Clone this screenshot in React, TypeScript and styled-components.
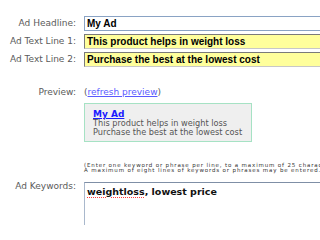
import styled, { createGlobalStyle } from "styled-components";

const GlobalStyle = createGlobalStyle`
    html, body {
        margin: 0;
        padding: 0;
        background: #ffffff;
        overflow: hidden;
    }
`

const Form = styled.div`
    width: 320px;
    height: 225px;
    padding-top: 16px;
    box-sizing: border-box;
    overflow: hidden;
    display: grid;
    grid-template-columns: 76px minmax(0, 1fr);
    column-gap: 8px;
    font-family: "DejaVu Sans", Verdana, sans-serif;
`

const Label = styled.div<{ top?: number }>`
    font-size: 9px;
    color: #5a5a5a;
    text-align: right;
    padding-top: ${props => props.top ?? 2}px;
    white-space: nowrap;
`

const Field = styled.div<{ bottom?: number }>`
    margin-bottom: ${props => props.bottom ?? 0}px;
    min-width: 0;
`

const TextInput = styled.div<{ highlight?: boolean }>`
    height: 15px;
    box-sizing: border-box;
    padding: 0 2px;
    font-family: "Liberation Sans", Arial, sans-serif;
    font-weight: 700;
    font-size: 10px;
    line-height: 13px;
    color: #000;
    white-space: nowrap;
    overflow: hidden;
    background: ${props => props.highlight ? "#ffff9c" : "#ffffff"};
    border: 1px solid ${props => props.highlight ? "#c8c8c8" : "#8aa3c4"};
    border-top-color: ${props => props.highlight ? "#7a7a7a" : "#8aa3c4"};
    border-left-color: ${props => props.highlight ? "#7a7a7a" : "#8aa3c4"};
    border-right: none;
`

const Refresh = styled.div`
    margin-top: 20px;
    font-size: 9px;
    color: #5a5a5a;
`

const Link = styled.a`
    color: #5a5aff;
    text-decoration: underline;
    cursor: pointer;
`

const PreviewBox = styled.div`
    width: 168px;
    height: 39px;
    box-sizing: border-box;
    margin-top: 6px;
    padding: 5px 8px 0;
    background: #efefef;
    border: 1px solid #a6e2c4;
`

const PreviewTitle = styled.a`
    display: block;
    font-size: 9px;
    font-weight: 700;
    line-height: 10px;
    color: #1a1aff;
    text-decoration: underline;
`

const PreviewLine = styled.div`
    font-size: 8.2px;
    line-height: 9px;
    color: #555;
    white-space: nowrap;
`

const Hint = styled.div`
    margin-top: 21px;
    min-width: 0;
`

const HintLine = styled.div`
    height: 5px;
    font-size: 5.5px;
    letter-spacing: 0.85px;
    line-height: 5px;
    color: #333;
    white-space: nowrap;
`

const KeywordBox = styled.div`
    margin-top: 9px;
    height: 50px;
    box-sizing: border-box;
    padding: 3px 2px;
    font-size: 9.5px;
    font-weight: 700;
    color: #111;
    border: 1px solid #a9b8cc;
    border-top-color: #7f8fa6;
    border-right: none;
    border-bottom: none;
`

const Misspelled = styled.span`
    text-decoration: underline dotted #ff3b3b;
    text-decoration-thickness: 1px;
    text-underline-offset: 2px;
`

export default function App() {
    return (
        <>
            <GlobalStyle />
            <Form>
                <Label>Ad Headline:</Label>
                <Field bottom={3}>
                    <TextInput>My Ad</TextInput>
                </Field>
                <Label>Ad Text Line 1:</Label>
                <Field bottom={3}>
                    <TextInput highlight>This product helps in weight loss</TextInput>
                </Field>
                <Label>Ad Text Line 2:</Label>
                <Field>
                    <TextInput highlight>Purchase the best at the lowest cost</TextInput>
                </Field>

                <Label top={20}>Preview:</Label>
                <Field>
                    <Refresh>
                        (<Link>refresh preview</Link>)
                    </Refresh>
                    <PreviewBox>
                        <PreviewTitle>My Ad</PreviewTitle>
                        <PreviewLine>This product helps in weight loss</PreviewLine>
                        <PreviewLine>Purchase the best at the lowest cost</PreviewLine>
                    </PreviewBox>
                </Field>

                <div />
                <Hint>
                    <HintLine>(Enter one keyword or phrase per line, to a maximum of 25 characters each.)</HintLine>
                    <HintLine>A maximum of eight lines of keywords or phrases may be entered.</HintLine>
                </Hint>

                <Label top={8}>Ad Keywords:</Label>
                <KeywordBox>
                    <Misspelled>weightloss</Misspelled>, lowest price
                </KeywordBox>
            </Form>
        </>
    )
}
